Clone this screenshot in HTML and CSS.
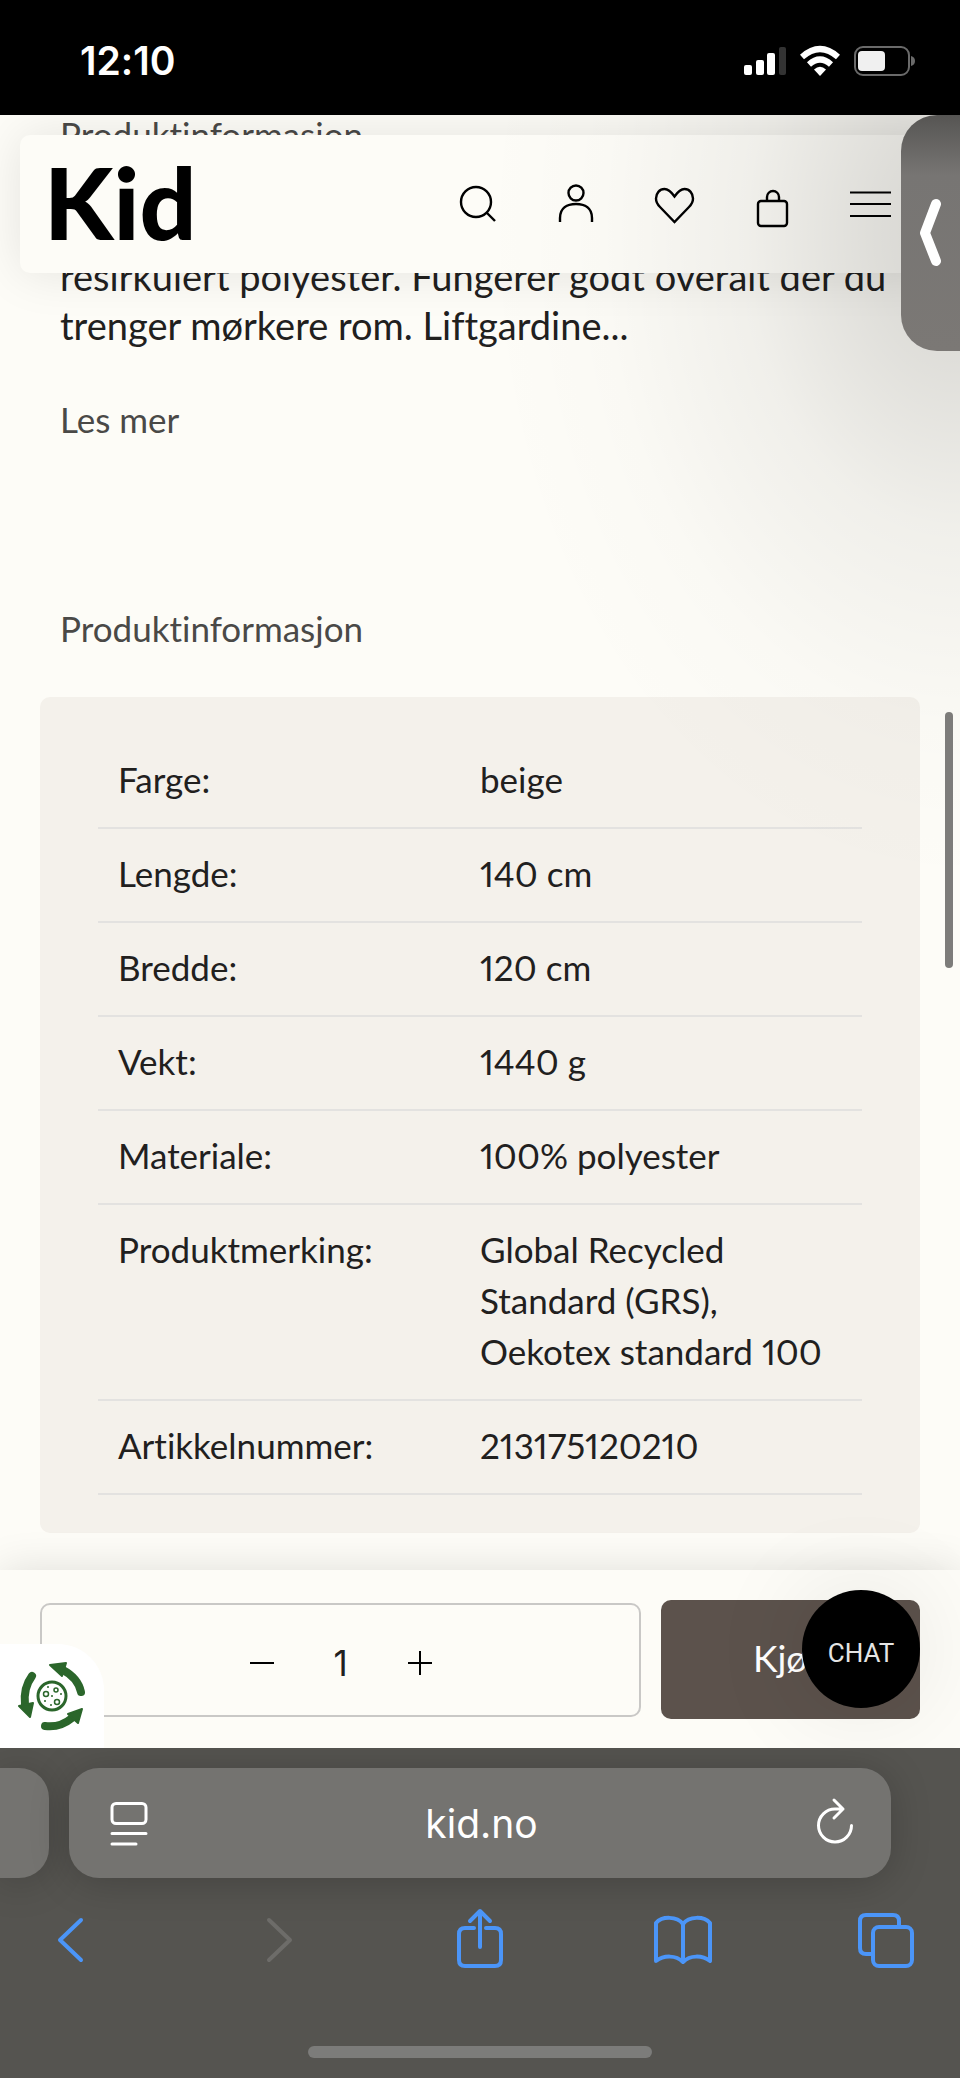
FILE: index.html
```html
<!DOCTYPE html>
<html lang="no">
<head>
<meta charset="utf-8">
<meta name="viewport" content="width=device-width, initial-scale=1">
<title>Kid – Produktinformasjon</title>
<link rel="stylesheet" href="styles.css">
</head>
<body>
<div class="status-bar">
  <span class="clock">12:10</span>
  <div class="indicators">
    <svg width="42" height="30" viewBox="0 0 42 30" aria-hidden="true">
      <g fill="#fff"><rect x="0" y="19" width="8" height="10" rx="2"/><rect x="12" y="14" width="8" height="15" rx="2"/><rect x="23" y="7" width="8" height="22" rx="2"/></g>
      <rect x="35" y="1" width="7" height="28" rx="2" fill="#333"/>
    </svg>
    <svg width="40" height="30" viewBox="0 0 40 30" aria-hidden="true">
      <g fill="none" stroke="#fff" stroke-width="6"><path d="M2 11Q20-5 38 11"/><path d="M9 18.500Q20 8.500 31 18.500"/></g>
      <path d="M14 23.500Q20 18 26 23.500L20 30Z" fill="#fff"/>
    </svg>
    <svg width="61" height="30" viewBox="0 0 61 30" aria-hidden="true">
      <rect x="1" y="1" width="54" height="28" rx="8" fill="none" stroke="#6a6a6a" stroke-width="2"/>
      <rect x="4" y="5" width="27" height="20" rx="4" fill="#f0f0f0"/>
      <path d="M57 10Q61 11 61 15T57 20Z" fill="#6a6a6a"/>
    </svg>
  </div>
</div>

<div class="viewport">
  <main class="content">
    <h2 class="section-title">Produktinformasjon</h2>
    <p class="description">resirkulert polyester. Fungerer godt overalt der du trenger mørkere rom. Liftgardine...</p>
    <a class="read-more" href="#mer">Les mer</a>
    <h2 class="section-title">Produktinformasjon</h2>
    <section class="spec-panel">
      <table class="specs">
        <tbody>
          <tr><th scope="row">Farge:</th><td>beige</td></tr>
          <tr><th scope="row">Lengde:</th><td>140 cm</td></tr>
          <tr><th scope="row">Bredde:</th><td>120 cm</td></tr>
          <tr><th scope="row">Vekt:</th><td>1440 g</td></tr>
          <tr><th scope="row">Materiale:</th><td>100% polyester</td></tr>
          <tr><th scope="row">Produktmerking:</th><td>Global Recycled<br>Standard (GRS),<br>Oekotex standard 100</td></tr>
          <tr><th scope="row">Artikkelnummer:</th><td>213175120210</td></tr>
        </tbody>
      </table>
    </section>
  </main>

  <form class="buy-bar">
    <div class="quantity">
      <button class="step" type="button" aria-label="Færre"><svg width="26" height="26" viewBox="0 0 26 26"><path d="M1 13H25"/></svg></button>
      <input class="amount" type="text" value="1" aria-label="Antall">
      <button class="step" type="button" aria-label="Flere"><svg width="26" height="26" viewBox="0 0 26 26"><path d="M1 13H25M13 1V25"/></svg></button>
    </div>
    <button class="buy" type="submit">Kjøp</button>
    <button class="chat" type="button">CHAT</button>
  </form>

  <header class="site-header">
    <a class="logo" href="#hjem">Kid</a>
    <nav class="site-nav">
      <button class="icon-button" type="button" aria-label="Søk"><svg viewBox="0 0 42 42"><circle cx="18" cy="19" r="15"/><path d="M29 30L37 38"/></svg></button>
      <button class="icon-button" type="button" aria-label="Min side"><svg viewBox="0 0 42 42"><circle cx="20" cy="10" r="7.500"/><path d="M4 39V35C4 25 11 21 20 21S36 25 36 35V39"/></svg></button>
      <button class="icon-button" type="button" aria-label="Favoritter"><svg viewBox="0 0 42 42"><path d="M20.500 13.500C17 8.500 14.500 6 10.500 6C5.500 6 2 10.500 2 15.500C2 19 3.500 21.500 6 24L20.500 39L35 24C37.500 21.500 39 19 39 15.500C39 10.500 35.500 6 30.500 6C26.500 6 24 8.500 20.500 13.500Z"/></svg></button>
      <button class="icon-button" type="button" aria-label="Handlekurv"><svg viewBox="0 0 42 42"><rect x="6" y="18" width="29" height="25" rx="3"/><path d="M15 18V14A6 6 0 0 1 27 14V18"/></svg></button>
      <button class="icon-button" type="button" aria-label="Meny"><svg viewBox="0 0 42 42"><path d="M0 9.500H41M0 21H41M0 33H41" stroke-width="2"/></svg></button>
    </nav>
  </header>

  <button class="cookie" type="button" aria-label="Informasjonskapsler">
    <svg width="104" height="104" viewBox="0 0 104 104">
      <g fill="none" stroke="#2b662b" stroke-width="8" stroke-linecap="round"><path d="M81 48Q78 34 63 26"/><path d="M32 32Q23 44 25 61"/><path d="M45 82Q60 84 72 74"/></g>
      <g fill="#2b662b" stroke="#2b662b" stroke-width="2" stroke-linejoin="round"><path d="M50 21L66 19L62 32Z"/><path d="M30 73L19 62L33 59Z"/><path d="M82 65L68 70L78 79Z"/></g>
      <g fill="none" stroke="#2b662b"><circle cx="52" cy="52" r="14" stroke-width="3"/><g stroke-width="1.500"><circle cx="46" cy="50" r="2.500"/><circle cx="56" cy="46" r="2"/><circle cx="57" cy="58" r="2.500"/></g></g>
      <g fill="#2b662b"><circle cx="48" cy="43" r="1"/><circle cx="52" cy="52" r="1"/><circle cx="61" cy="50" r="1"/><circle cx="45" cy="57" r="1"/><circle cx="51" cy="61" r="1"/></g>
    </svg>
  </button>
  <div class="side-shade"></div>
  <div class="scroll-thumb"></div>
  <button class="side-tab" type="button" aria-label="Åpne panel">
    <svg width="59" height="80" viewBox="0 0 59 80"><path d="M35 11L24 40L35 68" fill="none" stroke="#fff" stroke-width="10" stroke-linecap="round" stroke-linejoin="round"/></svg>
  </button>
</div>

<footer class="browser-bar">
  <div class="tabs-row">
    <div class="previous-tab"></div>
    <div class="address">
      <button class="address-button" type="button" aria-label="Sidemeny"><svg width="44" height="50" viewBox="0 0 44 50"><rect x="6" y="5.500" width="34" height="20" rx="4"/><path d="M6 35.500H40M6 46H30"/></svg></button>
      <span class="host">kid.no</span>
      <button class="address-button" type="button" aria-label="Last inn på nytt"><svg width="44" height="50" viewBox="0 0 44 50"><path d="M30 11H22A16.500 16.500 0 1 0 38.500 27.500M21 2L30 11L21 20"/></svg></button>
    </div>
  </div>
  <nav class="toolbar">
    <button class="tool" type="button" aria-label="Tilbake"><svg viewBox="0 0 60 60"><path d="M38 10L17 30L38 50"/></svg></button>
    <button class="tool" type="button" aria-label="Frem" disabled><svg viewBox="0 0 60 60"><path d="M23 10L44 30L23 50"/></svg></button>
    <button class="tool" type="button" aria-label="Del"><svg viewBox="0 0 60 60"><path d="M25 18H16Q10 18 10 24V50Q10 56 16 56H46Q52 56 52 50V24Q52 18 46 18H37M31 37V2M21 11L31 1L41 11"/></svg></button>
    <button class="tool" type="button" aria-label="Bokmerker"><svg viewBox="0 0 60 60"><path d="M31 14C25 6 10 6 4 13V51C12 45 24 45 31 52C38 45 50 45 58 51V13C52 6 37 6 31 14V52"/></svg></button>
    <button class="tool" type="button" aria-label="Faner"><svg viewBox="0 0 60 60"><rect x="18" y="17" width="39" height="39" rx="6"/><path d="M18 44H11Q5 44 5 38V11Q5 5 11 5H38Q44 5 44 11V17"/></svg></button>
  </nav>
  <div class="home-indicator"></div>
</footer>
</body>
</html>
```
FILE: styles.css
```css
* {
  box-sizing: border-box;
}

body {
  margin: 0;
  min-height: 100vh;
  display: flex;
  flex-direction: column;
  background: #fdfcf7;
  color: #21201e;
  font-family: Lato, sans-serif;
  font-size: 35px;
  font-variant-ligatures: none;
  font-variant-numeric: proportional-nums;
}

button,
input {
  margin: 0;
  padding: 0;
  border: 0;
  background: none;
  color: inherit;
  font: inherit;
}

svg {
  display: block;
  overflow: visible;
}

.status-bar {
  display: flex;
  align-items: center;
  justify-content: space-between;
  height: 115px;
  padding: 6px 45px 0 80px;
  background: #000;
  color: #fff;
}

.clock {
  font-family: Inter, sans-serif;
  font-size: 39px;
  font-weight: 600;
}

.indicators {
  display: flex;
  gap: 14px;
}

.viewport {
  position: relative;
  flex: 1;
  display: flex;
  flex-direction: column;
  overflow: hidden;
}

.content {
  flex: 1;
  padding: 0 40px 37px;
}

.section-title {
  margin: 0;
  padding: 0 20px;
  color: #4a4947;
  font-size: 35px;
  font-weight: 400;
  line-height: 38px;
}

.description {
  margin: 99px 0 0;
  padding: 0 20px;
  font-size: 38px;
  line-height: 49px;
}

.read-more {
  display: block;
  margin: 49px 0 170px;
  padding: 0 20px;
  color: #4a4947;
  font-size: 35px;
  line-height: 40px;
  text-decoration: none;
}

.spec-panel {
  margin-top: 50px;
  padding: 38px 58px;
  border-radius: 10px;
  background: #f4f1eb;
}

.specs {
  width: 100%;
  border-collapse: separate;
  border-spacing: 0;
  table-layout: fixed;
  font-size: 35px;
  line-height: 51px;
}

.specs th,
.specs td {
  padding: 19px 0 22px;
  border-bottom: 2px solid #e3e2e0;
  font-weight: 400;
  text-align: left;
  vertical-align: top;
}

.specs th {
  padding-left: 20px;
}

.buy-bar {
  position: relative;
  display: flex;
  align-items: center;
  gap: 20px;
  padding: 30px 40px 29px;
  background: #fdfcf7;
  box-shadow: 0 0 40px rgba(0, 0, 0, 0.12);
}

.quantity {
  flex: 1;
  display: flex;
  align-items: center;
  justify-content: center;
  gap: 26px;
  height: 114px;
  padding-top: 6px;
  border: 2px solid #c9c8c6;
  border-radius: 10px;
}

.step {
  stroke: #000;
  stroke-width: 2;
}

.amount {
  width: 80px;
  font-family: Inter, sans-serif;
  font-size: 35px;
  text-align: center;
}

.buy {
  width: 259px;
  height: 119px;
  padding-bottom: 4px;
  border-radius: 10px;
  background: #5c524c;
  color: #fff;
  font-size: 37px;
}

.chat {
  position: absolute;
  top: 20px;
  right: 40px;
  width: 118px;
  height: 118px;
  padding-top: 8px;
  border-radius: 50%;
  background: #000;
  box-shadow: 0 0 100px rgba(0, 0, 0, 0.1);
  color: #e4e4e4;
  font-family: Roboto, sans-serif;
  font-size: 26px;
}

.site-header {
  position: absolute;
  top: 20px;
  left: 20px;
  right: 20px;
  display: flex;
  align-items: center;
  justify-content: space-between;
  height: 138px;
  padding: 0 48px 0 24px;
  border-radius: 10px;
  background: #fdfcf7;
  box-shadow: 0 0 50px rgba(0, 0, 0, 0.1);
}

.logo {
  padding-bottom: 6px;
  color: #000;
  font-size: 100px;
  font-weight: 900;
  line-height: 132px;
  text-decoration: none;
}

.site-nav {
  display: flex;
  gap: 56px;
}

.icon-button {
  width: 42px;
  height: 42px;
}

.icon-button svg {
  fill: none;
  stroke: #000;
  stroke-width: 2.4;
}

.cookie {
  position: absolute;
  left: 0;
  bottom: 0;
  border-radius: 0 46px 0 0;
  background: #fff;
}

.side-shade {
  position: absolute;
  top: 0;
  right: 0;
  width: 480px;
  height: 780px;
  background: radial-gradient(480px 660px at 100% 118px, rgba(0, 0, 0, 0.16), rgba(0, 0, 0, 0.12) 18%, rgba(0, 0, 0, 0.05) 45%, rgba(0, 0, 0, 0.01) 75%, rgba(0, 0, 0, 0));
  pointer-events: none;
}

.scroll-thumb {
  position: absolute;
  top: 597px;
  right: 7px;
  width: 8px;
  height: 256px;
  border-radius: 4px;
  background: #7d7c7a;
}

.side-tab {
  position: absolute;
  top: 0;
  right: 0;
  width: 59px;
  height: 236px;
  border-radius: 36px 0 0 36px;
  background: linear-gradient(#565553, #777573 60px, #7b7875);
}

.browser-bar {
  padding: 20px 0;
  background: #555450;
  overflow: hidden;
}

.tabs-row {
  display: flex;
  gap: 20px;
  padding-right: 69px;
}

.previous-tab {
  width: 49px;
  border-radius: 0 30px 30px 0;
  background: #747370;
  box-shadow: 0 4px 40px rgba(0, 0, 0, 0.2);
}

.address {
  flex: 1;
  display: flex;
  align-items: center;
  justify-content: space-between;
  height: 110px;
  padding: 0 34px 0 37px;
  border-radius: 30px;
  background: #747370;
  box-shadow: 0 4px 40px rgba(0, 0, 0, 0.2);
  color: #fff;
}

.address-button svg {
  fill: none;
  stroke: #fff;
  stroke-width: 3;
  stroke-linecap: round;
  stroke-linejoin: round;
}

.host {
  font-family: Inter, sans-serif;
  font-size: 39px;
}

.toolbar {
  display: flex;
  justify-content: space-between;
  padding: 32px 45px 0 43px;
}

.tool {
  width: 60px;
  height: 60px;
}

.tool svg {
  fill: none;
  stroke: #4b95f8;
  stroke-width: 4;
  stroke-linecap: round;
  stroke-linejoin: round;
}

.tool:disabled svg {
  stroke: #6d6c69;
}

.home-indicator {
  width: 344px;
  height: 12px;
  margin: 76px auto 0;
  border-radius: 6px;
  background: #7c7c7a;
}
```
